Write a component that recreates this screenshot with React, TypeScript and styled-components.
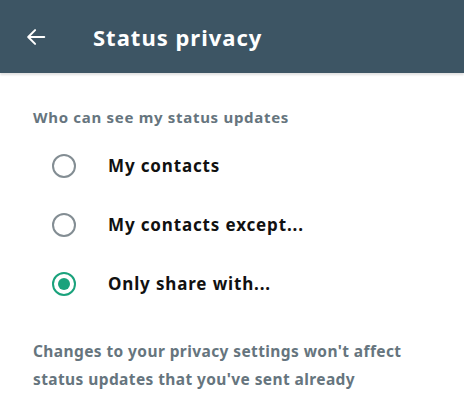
import styled, { createGlobalStyle } from "styled-components";

const GlobalStyle = createGlobalStyle`
  body {
    margin: 0;
    background: #ffffff;
    font-family: "Noto Sans", "Open Sans", sans-serif;
  }
`;

const Header = styled.header`
  height: 73px;
  background-color: #3d5564;
  display: flex;
  align-items: center;
  padding-left: 24px;
  box-shadow: 0 2px 2px rgba(0, 0, 0, 0.12);
`;

const BackBtn = styled.button`
  width: 24px;
  height: 24px;
  padding: 0;
  border: none;
  background: none;
  display: flex;
  align-items: center;
  justify-content: center;
  cursor: pointer;
`;

const Title = styled.h1`
  margin: 0 0 0 45px;
  font-size: 22px;
  font-weight: 700;
  color: #ffffff;
  letter-spacing: 1px;
`;

const Content = styled.main`
  padding: 34px 0 0 33px;
`;

const SectionLabel = styled.div`
  font-size: 15px;
  font-weight: 700;
  color: #66757e;
  line-height: 20px;
  letter-spacing: 0.7px;
  margin-bottom: 9px;
`;

const List = styled.div`
  display: flex;
  flex-direction: column;
`;

const Row = styled.label`
  height: 59px;
  display: flex;
  align-items: center;
  padding-left: 19px;
  gap: 32px;
  cursor: pointer;
`;

const Radio = styled.span<{ checked: boolean }>`
  width: 24px;
  height: 24px;
  box-sizing: border-box;
  border-radius: 50%;
  border: 2.5px solid ${(props) => (props.checked ? "#1aa27c" : "#838d93")};
  display: flex;
  align-items: center;
  justify-content: center;

  &::after {
    content: "";
    width: 12px;
    height: 12px;
    border-radius: 50%;
    background: #1aa27c;
    display: ${(props) => (props.checked ? "block" : "none")};
  }
`;

const OptionText = styled.span`
  font-size: 17px;
  font-weight: 700;
  color: #111111;
  letter-spacing: 0.85px;
`;

const Note = styled.p`
  margin: 24px 30px 0 0;
  font-size: 15.5px;
  font-weight: 700;
  line-height: 28px;
  letter-spacing: 0.4px;
  color: #66757e;
`;

const options = [
  { label: "My contacts", checked: false },
  { label: "My contacts except...", checked: false },
  { label: "Only share with...", checked: true },
];

const App = () => {
  return (
    <div>
      <GlobalStyle />
      <Header>
        <BackBtn aria-label="Back">
          <svg width="22" height="22" viewBox="0 0 24 24" fill="none">
            <path
              d="M21 12H4M11 4.5L3.5 12l7.5 7.5"
              stroke="#ffffff"
              strokeWidth="2.2"
              strokeLinecap="round"
              strokeLinejoin="round"
            />
          </svg>
        </BackBtn>
        <Title>Status privacy</Title>
      </Header>
      <Content>
        <SectionLabel>Who can see my status updates</SectionLabel>
        <List>
          {options.map((o) => (
            <Row key={o.label}>
              <Radio checked={o.checked} />
              <OptionText>{o.label}</OptionText>
            </Row>
          ))}
        </List>
        <Note>
          Changes to your privacy settings won't affect status updates that
          you've sent already
        </Note>
      </Content>
    </div>
  );
};

export default App;
